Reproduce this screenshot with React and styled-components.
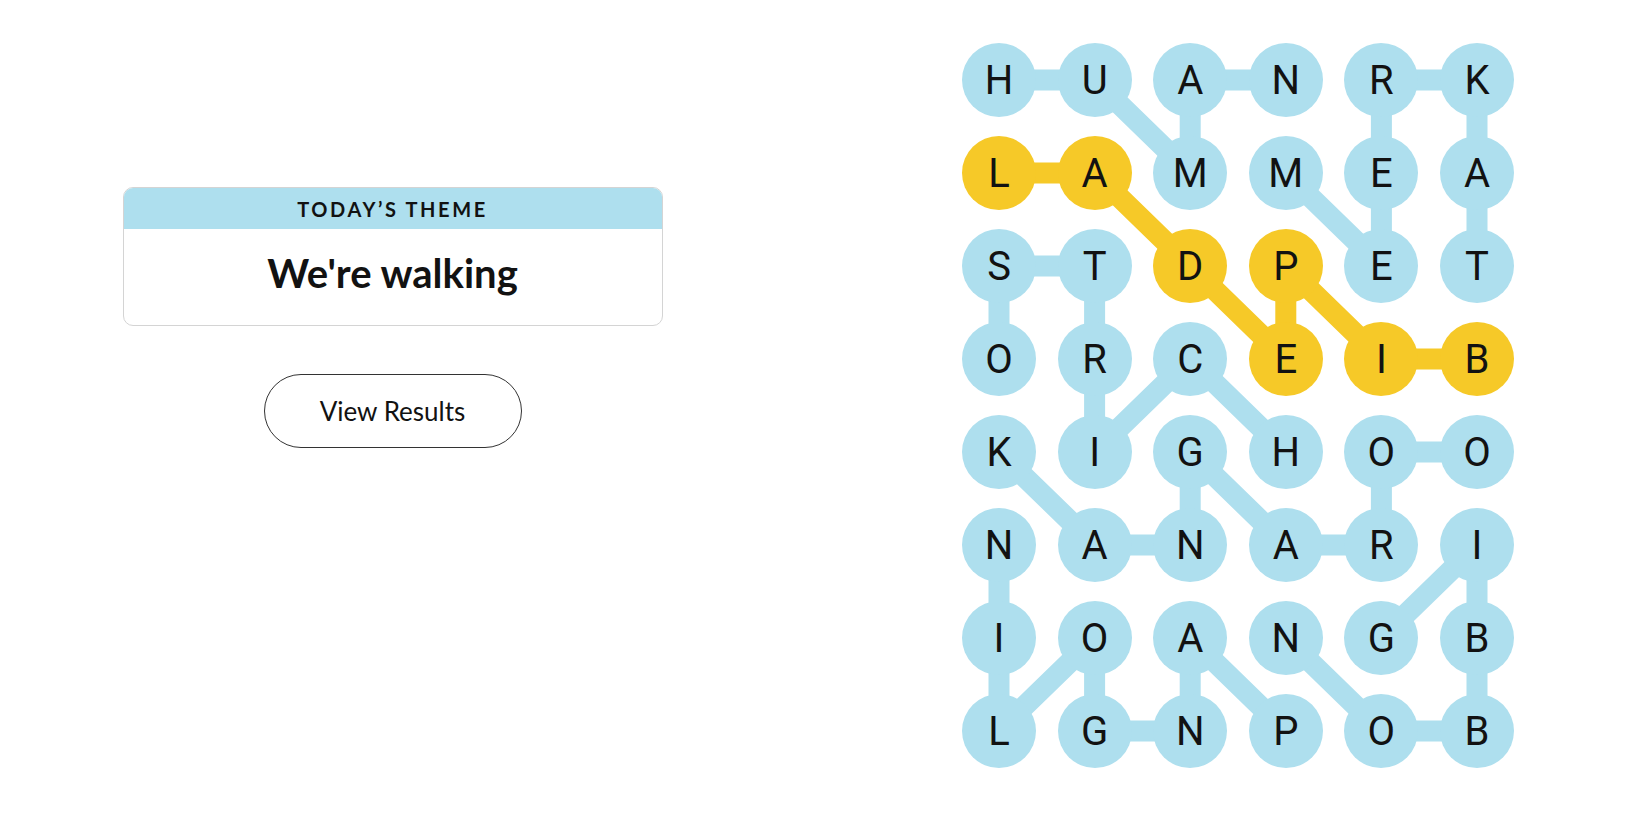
import styled, { createGlobalStyle } from 'styled-components';

const GlobalStyle = createGlobalStyle`
    html, body {
        margin: 0;
        padding: 0;
        background: #ffffff;
        font-family: 'Lato', 'Roboto', 'Liberation Sans', sans-serif;
        color: #121212;
    }
`;

const BLUE = '#aedfee';
const YELLOW = '#f6c928';

const CELL = 74;
const STEP_X = 95.6;
const STEP_Y = 93;

const letters = [
    'HUANRK',
    'LAMMEA',
    'STDPET',
    'ORCEIB',
    'KIGHOO',
    'NANARI',
    'IOANGB',
    'LGNPOB',
];

// found words as paths of [row, col]
const words = [
    { kind: 'theme', path: [[0, 0], [0, 1], [1, 2], [0, 2], [0, 3]] },
    { kind: 'theme', path: [[1, 3], [2, 4], [1, 4], [0, 4], [0, 5], [1, 5], [2, 5]] },
    { kind: 'theme', path: [[3, 0], [2, 0], [2, 1], [3, 1], [4, 1], [3, 2], [4, 3]] },
    { kind: 'theme', path: [[4, 0], [5, 1], [5, 2], [4, 2], [5, 3], [5, 4], [4, 4], [4, 5]] },
    { kind: 'theme', path: [[6, 4], [5, 5], [6, 5], [7, 5], [7, 4], [6, 3]] },
    { kind: 'theme', path: [[7, 3], [6, 2], [7, 2], [7, 1], [6, 1], [7, 0], [6, 0], [5, 0]] },
    { kind: 'spangram', path: [[3, 5], [3, 4], [2, 3], [3, 3], [2, 2], [1, 1], [1, 0]] },
];

const cellKind = {};
words.forEach((w) => w.path.forEach(([r, c]) => (cellKind[`${r}-${c}`] = w.kind)));

const Page = styled.main`
    display: flex;
    align-items: flex-start;
    min-height: 825px;
`;

const InfoColumn = styled.section`
    width: 785px;
    padding-top: 187px;
    display: flex;
    flex-direction: column;
    align-items: center;
`;

const ThemeCard = styled.div`
    width: 540px;
    border: 1px solid #d4d4d4;
    border-radius: 10px;
    overflow: hidden;
    box-sizing: border-box;
`;

const ThemeHeader = styled.div`
    background: ${BLUE};
    height: 41px;
    display: flex;
    align-items: center;
    justify-content: center;
    font-size: 20px;
    font-weight: 700;
    letter-spacing: 2.6px;
    text-transform: uppercase;
    color: #121212;
    padding-top: 1px;
    box-sizing: border-box;
`;

const ThemeBody = styled.div`
    height: 96px;
    display: flex;
    align-items: center;
    justify-content: center;
    font-size: 40px;
    font-weight: 700;
    color: #121212;
    padding-bottom: 9px;
    box-sizing: border-box;
`;

const ResultsButton = styled.button`
    margin-top: 48px;
    width: 258px;
    height: 74px;
    border: 1px solid #333333;
    border-radius: 37px;
    background: #ffffff;
    font-family: inherit;
    font-size: 26px;
    color: #121212;
    cursor: pointer;
`;

const BoardColumn = styled.section`
    padding-top: 43px;
    padding-left: 177px;
`;

const Board = styled.div`
    position: relative;
    width: ${CELL + STEP_X * 5}px;
    height: ${CELL + STEP_Y * 7}px;
`;

const Connectors = styled.svg`
    position: absolute;
    inset: 0;
    width: 100%;
    height: 100%;
`;

const LetterGrid = styled.div`
    position: relative;
    display: grid;
    grid-template-columns: repeat(6, ${CELL}px);
    grid-template-rows: repeat(8, ${CELL}px);
    column-gap: ${STEP_X - CELL}px;
    row-gap: ${STEP_Y - CELL}px;
`;

const Letter = styled.button`
    width: ${CELL}px;
    height: ${CELL}px;
    border: none;
    border-radius: 50%;
    padding: 0;
    background: ${({ $kind }) => ($kind === 'spangram' ? YELLOW : $kind === 'theme' ? BLUE : 'transparent')};
    font-family: 'Roboto', 'Liberation Sans', sans-serif;
    font-size: 40px;
    font-weight: 400;
    color: #121212;
    display: flex;
    align-items: center;
    justify-content: center;
`;

const centre = ([r, c]) => [CELL / 2 + c * STEP_X, CELL / 2 + r * STEP_Y];

function App() {
    return (
        <>
            <GlobalStyle />
            <Page>
                <InfoColumn>
                    <ThemeCard>
                        <ThemeHeader>Today’s Theme</ThemeHeader>
                        <ThemeBody>We're walking</ThemeBody>
                    </ThemeCard>
                    <ResultsButton>View Results</ResultsButton>
                </InfoColumn>
                <BoardColumn>
                    <Board>
                        <Connectors>
                            {words.map((w, i) => (
                                <polyline
                                    key={i}
                                    points={w.path.map((p) => centre(p).join(',')).join(' ')}
                                    fill="none"
                                    stroke={w.kind === 'spangram' ? YELLOW : BLUE}
                                    strokeWidth="21"
                                    strokeLinejoin="round"
                                />
                            ))}
                        </Connectors>
                        <LetterGrid>
                            {letters.map((row, r) =>
                                row.split('').map((ch, c) => (
                                    <Letter key={`${r}-${c}`} $kind={cellKind[`${r}-${c}`]}>
                                        {ch}
                                    </Letter>
                                ))
                            )}
                        </LetterGrid>
                    </Board>
                </BoardColumn>
            </Page>
        </>
    );
}

export default App;
